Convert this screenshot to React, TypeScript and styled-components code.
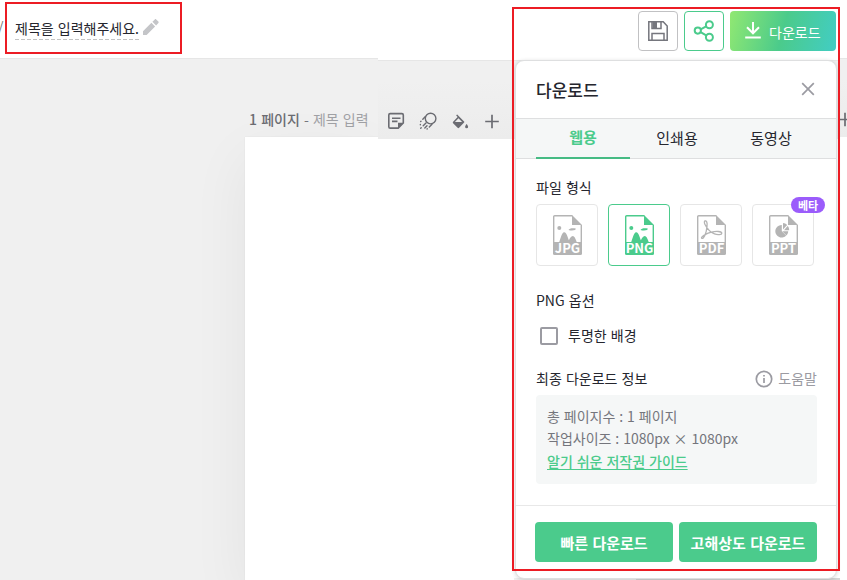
import React from "react";
import styled, { createGlobalStyle } from "styled-components";

const GlobalStyle = createGlobalStyle`
  * { box-sizing: border-box; }
  body {
    margin: 0;
    overflow: hidden;
    background: #f0f0f0;
    font-family: "Noto Sans CJK KR", "Noto Sans", sans-serif;
    font-size: 14px;
    color: #25262e;
  }
  button { font: inherit; padding: 0; cursor: pointer; }
  svg { display: block; flex: none; }
`;

const Screen = styled.div`
  position: relative;
  width: 847px;
  height: 580px;
  overflow: hidden;
  display: grid;
  grid-template-columns: 378px 462px 7px;
`;

const Column = styled.div`
  display: flex;
  flex-direction: column;
  height: 580px;
  min-width: 0;
  overflow: hidden;
`;

const TopBar = styled.header<{ $height: number }>`
  flex: none;
  height: ${(p) => p.$height}px;
  background: #fff;
  border-bottom: 1px solid #e6e6e6;
  display: flex;
`;

const Workspace = styled.div<{ $soft?: boolean }>`
  flex: 1;
  min-height: 0;
  overflow: hidden;
  display: flex;
  flex-direction: column;
  background: ${(p) => (p.$soft ? "#f0f0f0" : "linear-gradient(180deg, #f0f0f0 20px, #ececec 78px)")};
`;

const Crumb = styled.span`
  width: 15px;
  padding-top: 16px;
  line-height: 20px;
  color: #777;
  text-indent: -2px;
`;

const TitleField = styled.div`
  height: 22px;
  width: 125px;
  margin: 18px 2px 0 0;
  line-height: 20px;
  word-spacing: 1px;
  white-space: nowrap;
  background: repeating-linear-gradient(90deg, #c3c3c3 0 4px, transparent 4px 6px) bottom / 100% 1px no-repeat;
`;

const PencilWrap = styled.div`
  padding-top: 18px;
`;

const PageLabel = styled.div`
  height: 78px;
  padding: 50px 0 0 249px;
  line-height: 20px;
  word-spacing: 1px;
  color: #a0a1a5;
  white-space: nowrap;
`;

const PageName = styled.span`
  color: #6b6c72;
  font-weight: 500;
`;

const Dash = styled.span`
  color: #77787e;
`;

const Sheet = styled.div<{ $left?: number }>`
  flex: 1;
  margin-left: ${(p) => p.$left ?? 0}px;
  background: #fff;
  box-shadow: ${(p) => (p.$left ? "0 0 1px rgba(0, 0, 0, 0.1), 0 20px 60px rgba(0, 0, 0, 0.06)" : "none")};
`;

const PageTools = styled.div`
  height: 78px;
  padding: 50px 0 0 8px;
  display: flex;
  gap: 12px;
`;

const BottomStrip = styled.div`
  height: 2px;
  background: linear-gradient(90deg, #fff 136px, #f0f0f0 136px 258px, #d6d6d6 258px);
`;

const EdgeTool = styled.div`
  height: 78px;
  padding-top: 50px;
  svg { margin-left: -5px; }
`;

const Actions = styled.div`
  width: 100%;
  display: flex;
  justify-content: flex-end;
  gap: 6px;
  padding: 11px 4px 0 0;
`;

const SquareButton = styled.button<{ $accent?: boolean }>`
  width: 40px;
  height: 40px;
  border: 1px solid ${(p) => (p.$accent ? "#4bcb8c" : "#c1c1c3")};
  border-radius: 4px;
  background: #fff;
  display: grid;
  place-items: center;
`;

const DownloadButton = styled.button`
  width: 106px;
  height: 40px;
  border: 0;
  border-radius: 4px;
  background: linear-gradient(105deg, #91e872 0%, #4bcb8b 50%, #42cdc4 100%);
  color: #fff;
  display: flex;
  align-items: center;
  gap: 7px;
  padding: 1px 0 0 14px;
  svg { margin-top: -3px; }
`;

const Popover = styled.section`
  position: absolute;
  left: 515px;
  top: 60px;
  width: 322px;
  height: 519px;
  background: #fff;
  border: 1px solid #dedfe0;
  border-radius: 9px;
  box-shadow: 0 1px 4px rgba(0, 0, 0, 0.16);
  display: flex;
  flex-direction: column;
`;

const PopoverHeader = styled.div`
  height: 58px;
  padding: 0 21px 2px 20px;
  display: flex;
  align-items: center;
  justify-content: space-between;
  border-bottom: 1px solid #dedfe0;
`;

const PopoverTitle = styled.h2`
  margin: 0;
  padding-top: 2px;
  font-size: 17px;
  line-height: 24px;
  font-weight: 500;
`;

const Tabs = styled.div`
  height: 40px;
  padding-left: 20px;
  display: flex;
  background: #f5f7f7;
  border-bottom: 1px solid #dedfe0;
`;

const Tab = styled.div<{ $active?: boolean }>`
  width: 94px;
  height: 40px;
  line-height: ${(p) => (p.$active ? 35 : 37)}px;
  font-size: 15px;
  text-align: center;
  font-weight: ${(p) => (p.$active ? 700 : 400)};
  color: ${(p) => (p.$active ? "#4bcb8c" : "#25262e")};
  border-bottom: ${(p) => (p.$active ? "2px solid #46bb84" : "0")};
`;

const Body = styled.div`
  height: 347px;
  padding: 18px 19px 0 20px;
  border-bottom: 1px solid #e8e8e8;
  word-spacing: 1px;
`;

const SectionTitle = styled.div`
  height: 20px;
  line-height: 20px;
`;

const Formats = styled.div`
  display: flex;
  gap: 10px;
  margin: 7px 0 24px;
`;

const FormatCard = styled.div<{ $active?: boolean }>`
  position: relative;
  width: 62px;
  height: 62px;
  border: 1px solid ${(p) => (p.$active ? "#4bcb8c" : "#e6e6e6")};
  border-radius: 4px;
  color: ${(p) => (p.$active ? "#4bcb8c" : "#b4b4b4")};
  display: grid;
  place-items: center;
`;

const Beta = styled.span`
  position: absolute;
  top: -8px;
  right: -12px;
  width: 34px;
  height: 16px;
  border-radius: 8px;
  background: #9b5cfb;
  color: #fff;
  font-size: 11px;
  font-weight: 700;
  line-height: 16px;
  text-align: center;
`;

const Option = styled.div`
  display: flex;
  align-items: center;
  gap: 10px;
  height: 20px;
  padding-left: 4px;
  margin: 16px 0 22px;
`;

const OptionLabel = styled.span`
  line-height: 20px;
  margin-top: -2px;
`;

const Checkbox = styled.span`
  width: 18px;
  height: 18px;
  border: 2px solid #9b9ba2;
  border-radius: 2px;
`;

const InfoHead = styled.div`
  display: flex;
  justify-content: space-between;
  height: 20px;
  line-height: 20px;
`;

const Help = styled.span`
  display: flex;
  gap: 5px;
  color: #9b9ba2;
  svg { margin-top: 2px; }
`;

const InfoBox = styled.div`
  height: 89px;
  margin-top: 7px;
  padding: 10px 11px;
  border-radius: 4px;
  background: #f5f7f7;
  color: #74757c;
  line-height: 22px;
  word-spacing: 0.8px;
`;

const GuideLink = styled.a`
  display: block;
  color: #4bcb8c;
  font-weight: 500;
  line-height: 24px;
  text-decoration: underline;
  text-underline-offset: 2px;
`;

const Footer = styled.div`
  display: flex;
  gap: 6px;
  padding: 16px 19px 0;
`;

const FooterButton = styled.button`
  width: 138px;
  height: 40px;
  border: 0;
  border-radius: 4px;
  background: #4bcb8c;
  color: #fff;
  font-size: 15px;
  font-weight: 700;
  word-spacing: 1px;
`;

const Highlight = styled.div<{ $x: number; $y: number; $w: number; $h: number }>`
  position: absolute;
  left: ${(p) => p.$x}px;
  top: ${(p) => p.$y}px;
  width: ${(p) => p.$w}px;
  height: ${(p) => p.$h}px;
  border: 2px solid #ec1c24;
  pointer-events: none;
`;

const Pencil = () => (
  <svg width="18" height="18" viewBox="0 0 18 18" fill="#c4c5c8">
    <path d="M1 13.2V17h3.6l8.5-8.6-3.7-3.7zM10.4 3.7l3.7 3.7L16.4 5c.4-.4.4-1 0-1.4l-2.2-2.2c-.4-.4-1-.4-1.4 0z" />
  </svg>
);

const NoteIcon = () => (
  <svg width="20" height="20" viewBox="0 0 20 20" fill="none" stroke="#6b6c72" strokeWidth="1.6">
    <path d="M17.3 12V4a1.4 1.4 0 0 0-1.4-1.4H4.2A1.4 1.4 0 0 0 2.800 4v11.700a1.400 1.400 0 0 0 1.400 1.400h8z" />
    <path d="M6 7.200h8.500M6 10.400h5.500" />
    <path d="M12 17.300v-5.500h5.600z" fill="#6b6c72" stroke="none" />
  </svg>
);

const CometIcon = () => (
  <svg width="20" height="20" viewBox="0 0 20 20" fill="none" stroke="#6b6c72" strokeWidth="1.4" strokeLinecap="round">
    <circle cx="12.6" cy="7.600" r="5.300" />
    <path d="M7.400 5.600L4.800 8.200M8 12l-2.800 2.800M14 13.300l-2.700 2.700" />
    <path d="M3 10.200l-.3.300M3.200 16.800l-.5.500M9 14.800l-2.200 2.200M2.400 13.600l-.1.100M9.200 17.800l-.1.100" />
  </svg>
);

const BucketIcon = () => (
  <svg width="20" height="20" viewBox="0 0 20 20" fill="#6b6c72">
    <path fillRule="evenodd" d="M6.1 4.3L7.2 3.4l6.9 7.1c.4.4.4.7 0 1.1l-5 5.200c-.5.5-1 .5-1.500 0l-4.500-4.600c-.5-.5-.5-1 0-1.500l4.500-4.600zm2.400 3L4.900 11h7.200z" />
    <path d="M16.6 13s-1.500 1.700-1.500 2.800a1.500 1.500 0 0 0 3 0c0-1.100-1.500-2.800-1.500-2.800z" />
  </svg>
);

const PlusIcon = () => (
  <svg width="20" height="20" viewBox="0 0 20 20" stroke="#6b6c72" strokeWidth="1.7">
    <path d="M3.200 10.500h13.600M10 3.700v13.600" />
  </svg>
);

const SaveIcon = () => (
  <svg width="22" height="22" viewBox="0 0 22 22" fill="none" stroke="#75767d" strokeWidth="1.5">
    <path d="M1.800 1.800h14.400l4 4.200v14.200H1.800z" />
    <path d="M5 2v6.500h9V2M5 20v-6.500h12V20" />
    <path d="M5.500 2H10v6.500H5.500z" fill="#75767d" stroke="none" />
  </svg>
);

const ShareIcon = () => (
  <svg width="22" height="22" viewBox="0 0 22 22" fill="none" stroke="#4bcb8c" strokeWidth="2">
    <circle cx="4.800" cy="10.600" r="3.100" />
    <circle cx="16.400" cy="4.700" r="3.500" />
    <circle cx="16.400" cy="17.200" r="3.500" />
    <path d="M7.600 9.300l5.600-2.900M7.600 12.100l5.600 3.200" />
  </svg>
);

const DownloadIcon = () => (
  <svg width="18" height="18" viewBox="0 0 18 18" fill="none" stroke="#fff" strokeWidth="2">
    <path d="M9 1v11M3 6.300l6 6 6-6M1.200 16.400h15.600" />
  </svg>
);

const CloseIcon = () => (
  <svg width="14" height="14" viewBox="0 0 14 14" stroke="#9b9ba2" strokeWidth="1.7">
    <path d="M1.200 1.200l11.600 11.600M12.800 1.200L1.200 12.800" />
  </svg>
);

const InfoIcon = () => (
  <svg width="18" height="18" viewBox="0 0 18 18" fill="none" stroke="#9b9ba2" strokeWidth="1.7">
    <circle cx="9" cy="9" r="7.700" />
    <path d="M9 8v5M9 5v1.500" />
  </svg>
);

const Landscape = () => (
  <g fill="currentColor">
    <circle cx="6.300" cy="13" r="2" />
    <path d="M15.500 15c1-1.500 3-2 7.200-1.500.8 1.600-3.200 2.700-7.200 1.500z" />
    <path d="M6 27.500c1.500-3 2.600-10.200 5.200-10.200s3.600 5.700 4.700 8c1-2 2-4.300 3.900-4.300s3 3.800 4.200 6.500z" />
  </g>
);

const Acrobat = () => (
  <path
    d="M8.600 5.800c-1.400-.3-1.600 1.700-.6 3.700 2 4 5.800 7.900 9.500 9.400 3.200 1.300 7.300.8 7.300-.7 0-1.900-5.800-2.300-10.300-1-4.300 1.200-8.700 3.800-9.700 5-.8 1.100.4 1.800 1.600.5 2.200-2.400 3.900-9.200 3.700-13.900-.1-1.700-.4-2.800-1.500-3z"
    fill="none"
    stroke="currentColor"
    strokeWidth="1.3"
  />
);

const Pie = () => (
  <g fill="currentColor">
    <path d="M12.800 10v6.200l4.300 4.400-.1.200A6.300 6.300 0 1 1 12.800 10z" />
    <path d="M14 8v6.500l4.200-4.500C17 8.800 15.500 8.100 14 8z" />
    <path d="M15 15.200h5.200c0-1.700-.6-3.200-1.600-4.200zM13.200 16.200h6c0 1.600-.7 3-1.700 4.200z" />
  </g>
);

const FileIcon = ({ label, children }: { label: string; children: React.ReactNode }) => (
  <svg width="29" height="40" viewBox="0 0 29 40" overflow="visible">
    <path d="M19.300.7H1.700A1 1 0 0 0 .7 1.700V29h27.600V10" fill="none" stroke="currentColor" strokeWidth="1.4" />
    <path d="M19 0l10 10H19z" fill="currentColor" />
    {children}
    <path d="M0 27h29v11.500a1.500 1.500 0 0 1-1.500 1.500h-26A1.500 1.500 0 0 1 0 38.500z" fill="currentColor" />
    <text
      x="14.5"
      y="38"
      textAnchor="middle"
      fill="#fff"
      fontFamily="Noto Sans CJK KR"
      fontSize="13"
      fontWeight="700"
    >
      {label}
    </text>
  </svg>
);

export default function App() {
  return (
    <>
      <GlobalStyle />
      <Screen>
        <Column>
          <TopBar $height={59}>
            <Crumb>/</Crumb>
            <TitleField>제목을 입력해주세요.</TitleField>
            <PencilWrap>
              <Pencil />
            </PencilWrap>
          </TopBar>
          <Workspace $soft>
            <PageLabel>
              <PageName>1 페이지</PageName> <Dash>-</Dash> 제목 입력
            </PageLabel>
            <Sheet $left={245} />
          </Workspace>
        </Column>
        <Column>
          <TopBar $height={61}>
            <Actions>
              <SquareButton><SaveIcon /></SquareButton>
              <SquareButton $accent><ShareIcon /></SquareButton>
              <DownloadButton><DownloadIcon />다운로드</DownloadButton>
            </Actions>
          </TopBar>
          <Workspace>
            <PageTools>
              <NoteIcon />
              <CometIcon />
              <BucketIcon />
              <PlusIcon />
            </PageTools>
            <Sheet />
            <BottomStrip />
          </Workspace>
        </Column>
        <Column>
          <TopBar $height={59} />
          <Workspace>
            <EdgeTool><PlusIcon /></EdgeTool>
            <Sheet />
          </Workspace>
        </Column>

        <Popover>
          <PopoverHeader>
            <PopoverTitle>다운로드</PopoverTitle>
            <CloseIcon />
          </PopoverHeader>
          <Tabs>
            <Tab $active>웹용</Tab>
            <Tab>인쇄용</Tab>
            <Tab>동영상</Tab>
          </Tabs>
          <Body>
            <SectionTitle>파일 형식</SectionTitle>
            <Formats>
              <FormatCard><FileIcon label="JPG"><Landscape /></FileIcon></FormatCard>
              <FormatCard $active><FileIcon label="PNG"><Landscape /></FileIcon></FormatCard>
              <FormatCard><FileIcon label="PDF"><Acrobat /></FileIcon></FormatCard>
              <FormatCard>
                <FileIcon label="PPT"><Pie /></FileIcon>
                <Beta>베타</Beta>
              </FormatCard>
            </Formats>
            <SectionTitle>PNG 옵션</SectionTitle>
            <Option>
              <Checkbox />
              <OptionLabel>투명한 배경</OptionLabel>
            </Option>
            <InfoHead>
              최종 다운로드 정보
              <Help><InfoIcon />도움말</Help>
            </InfoHead>
            <InfoBox>
              <div>총 페이지수 : 1 페이지</div>
              <div>작업사이즈 : 1080px × 1080px</div>
              <GuideLink>알기 쉬운 저작권 가이드</GuideLink>
            </InfoBox>
          </Body>
          <Footer>
            <FooterButton>빠른 다운로드</FooterButton>
            <FooterButton>고해상도 다운로드</FooterButton>
          </Footer>
        </Popover>

        <Highlight $x={5} $y={2} $w={177} $h={52} />
        <Highlight $x={512} $y={7} $w={328} $h={564} />
      </Screen>
    </>
  );
}
